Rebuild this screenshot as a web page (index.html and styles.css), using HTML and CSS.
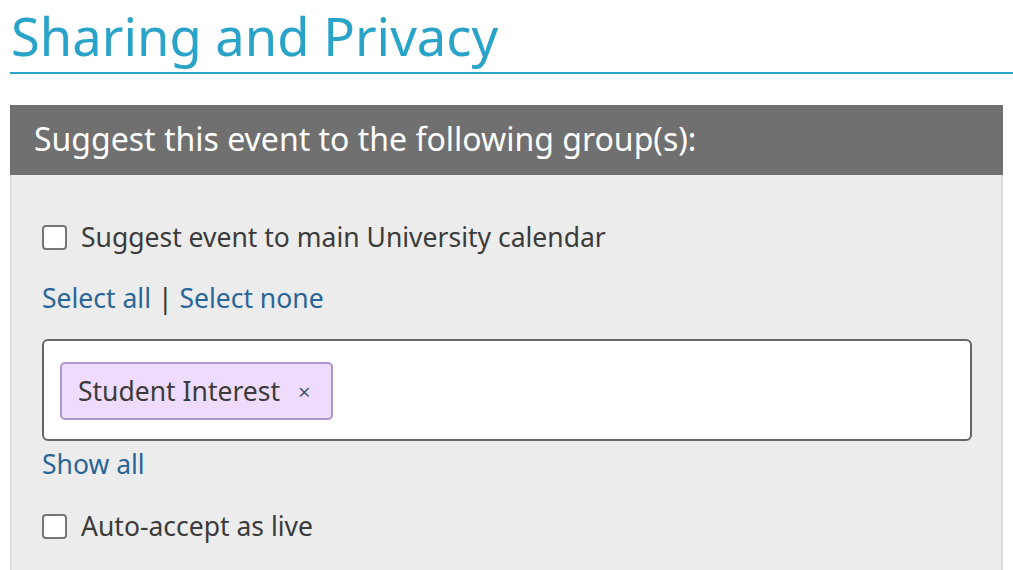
FILE: index.html
```html
<!DOCTYPE html>
<html lang="en">
<head>
<meta charset="utf-8">
<title>Sharing and Privacy</title>
<link rel="stylesheet" href="styles.css">
</head>
<body>
<div class="page">
  <h1 class="title">Sharing and Privacy</h1>
  <section class="panel">
    <div class="panel-head">Suggest this event to the following group(s):</div>
    <div class="panel-body">
      <label class="check-row"><span class="box"></span><span>Suggest event to main University calendar</span></label>
      <div class="select-links"><a href="#">Select all</a> <span class="sep">|</span> <a href="#">Select none</a></div>
      <div class="tag-input">
        <span class="tag">Student Interest <span class="tag-x">×</span></span>
      </div>
      <div class="show-all"><a href="#">Show all</a></div>
      <label class="check-row auto"><span class="box"></span><span>Auto-accept as live</span></label>
    </div>
  </section>
</div>
</body>
</html>
```

FILE: styles.css
```css
html, body {
  margin: 0;
  padding: 0;
  background: #ffffff;
  overflow: hidden;
}
body {
  font-family: "Noto Sans", "Open Sans", sans-serif;
  color: #3b3b3b;
}
.page {
  padding-left: 10px;
}
.title {
  margin: 0;
  font-weight: 400;
  font-size: 52.5px;
  line-height: 72px;
  color: #2aa3c8;
  padding-left: 1px;
  border-bottom: 2px solid #2aa3c8;
  height: 72px;
}
.panel {
  margin-top: 31px;
  width: 993px;
}
.panel-head {
  background: #707070;
  color: #ffffff;
  height: 70px;
  line-height: 68px;
  font-size: 32px;
  padding-left: 24px;
}
.panel-body {
  background: #ececec;
  border-left: 2px solid #e0e0e0;
  border-right: 2px solid #dcdcdc;
  padding: 48px 30px 0 30px;
  height: 395px;
  box-sizing: border-box;
}
.check-row {
  display: flex;
  align-items: center;
  gap: 14px;
  font-size: 26.5px;
  height: 28px;
}
.box {
  width: 21px;
  height: 21px;
  border: 2px solid #767676;
  border-radius: 4px;
  background: #fff;
  flex: none;
}
.select-links {
  margin-top: 33px;
  font-size: 26.5px;
  line-height: 28px;
}
a {
  color: #2a6598;
  text-decoration: none;
}
.sep {
  color: #333;
}
.tag-input {
  margin-top: 27px;
  width: 930px;
  height: 102px;
  border: 2px solid #666666;
  border-radius: 6px;
  background: #ffffff;
  padding: 21px 0 0 16px;
  box-sizing: border-box;
}
.tag {
  display: inline-flex;
  align-items: center;
  height: 58px;
  box-sizing: border-box;
  padding: 0 20px 0 16px;
  background: #efdcfd;
  border: 2px solid #ab95d0;
  border-radius: 5px;
  font-size: 26.5px;
  color: #3b3b3b;
}
.tag-x {
  margin-left: 18px;
  font-size: 22px;
  color: #4a5a78;
}
.show-all {
  margin-top: 6px;
  font-size: 26.5px;
  line-height: 34px;
}
.check-row.auto {
  margin-top: 31px;
}
```
